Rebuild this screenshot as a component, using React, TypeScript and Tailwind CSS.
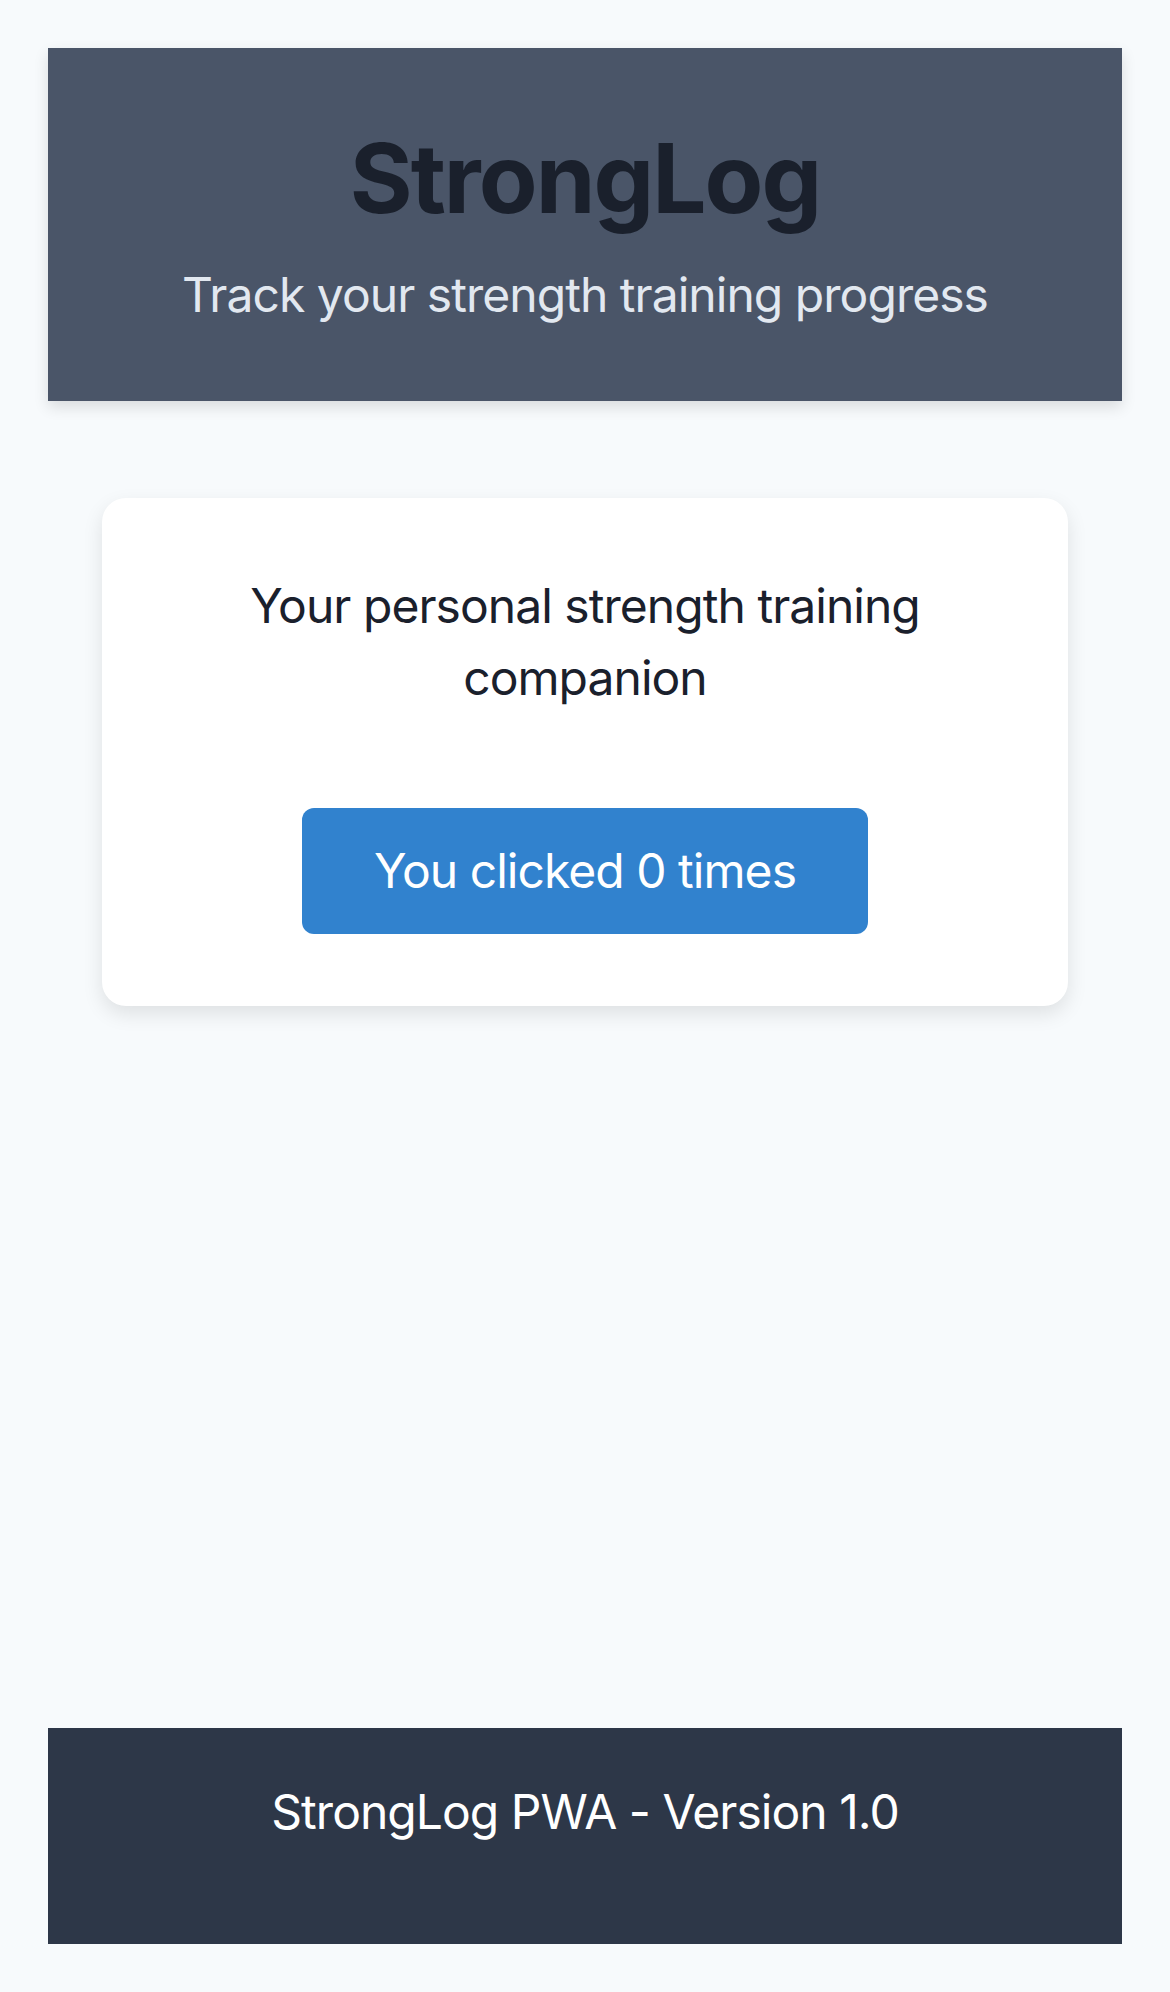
import { useState } from "react";

export default function App() {
    const [count, setCount] = useState(0);

    return (
        <div className="min-h-screen flex flex-col bg-[#f7fafc] font-['Inter','Liberation_Sans',sans-serif]">
            <header className="mx-[48px] mt-[48px] bg-[#4a5568] pt-[72px] pb-[77px] text-center shadow-[0_6px_14px_rgba(0,0,0,0.12)]">
                <h1 className="text-[96px] font-bold leading-[116px] tracking-[-0.02em] text-[#1a202c]">StrongLog</h1>
                <p className="mt-[30px] text-[48px] leading-[58px] tracking-[-0.02em] text-[#e2e8f0]">
                    Track your strength training progress
                </p>
            </header>

            <main className="flex-1 px-[102px] pt-[97px]">
                <div className="bg-white rounded-[24px] p-[72px] flex flex-col items-center shadow-[0_8px_20px_rgba(0,0,0,0.1)]">
                    <p className="text-[48px] leading-[72px] tracking-[-0.02em] text-[#1a202c] text-center px-[40px]">
                        Your personal strength training companion
                    </p>
                    <button
                        onClick={() => setCount(count + 1)}
                        className="mt-[94px] h-[126px] px-[72px] rounded-[12px] bg-[#3182ce] text-white text-[48px] leading-[58px] tracking-[-0.02em]"
                    >
                        You clicked {count} times
                    </button>
                </div>
            </main>

            <footer className="mx-[48px] mb-[48px] bg-[#2d3748] pt-[48px] pb-[96px] text-center">
                <p className="text-[48px] leading-[72px] tracking-[-0.02em] text-white">StrongLog PWA - Version 1.0</p>
            </footer>
        </div>
    );
}
